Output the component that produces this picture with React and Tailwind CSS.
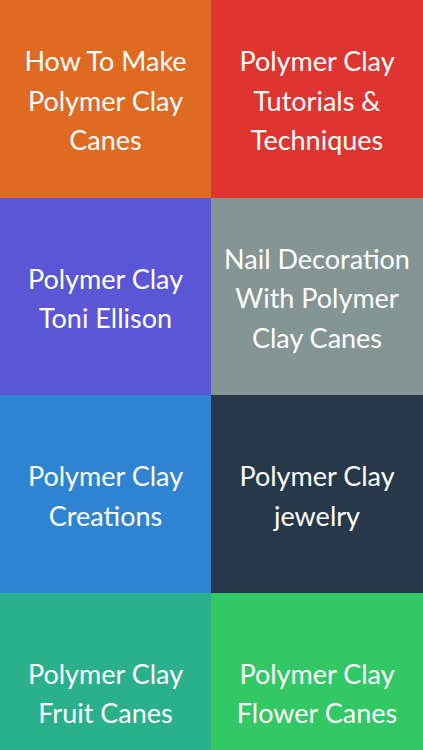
const tiles = [
  { lines: ["How To Make", "Polymer Clay", "Canes"], bg: "bg-[#df6a22]" },
  { lines: ["Polymer Clay", "Tutorials &", "Techniques"], bg: "bg-[#df3530]" },
  { lines: ["Polymer Clay", "Toni Ellison"], bg: "bg-[#5a56d6]" },
  { lines: ["Nail Decoration", "With Polymer", "Clay Canes"], bg: "bg-[#849594]" },
  { lines: ["Polymer Clay", "Creations"], bg: "bg-[#2e84d2]" },
  { lines: ["Polymer Clay", "jewelry"], bg: "bg-[#263849]" },
  { lines: ["Polymer Clay", "Fruit Canes"], bg: "bg-[#2ab08a]" },
  { lines: ["Polymer Clay", "Flower Canes"], bg: "bg-[#33c866]" },
];

export default function App() {
  return (
    <div className="w-[423px] h-[750px] overflow-hidden bg-white">
      <div className="grid grid-cols-[211px_212px] auto-rows-[197.7px]">
        {tiles.map((t, i) => (
          <div
            key={i}
            className={`${t.bg} flex flex-col items-center justify-center pt-[3px] text-white text-[27px] leading-[39.5px] text-center font-['Lato',sans-serif]`}
          >
            {t.lines.map((l, j) => (
              <span key={j} className="whitespace-nowrap">{l}</span>
            ))}
          </div>
        ))}
      </div>
    </div>
  );
}
